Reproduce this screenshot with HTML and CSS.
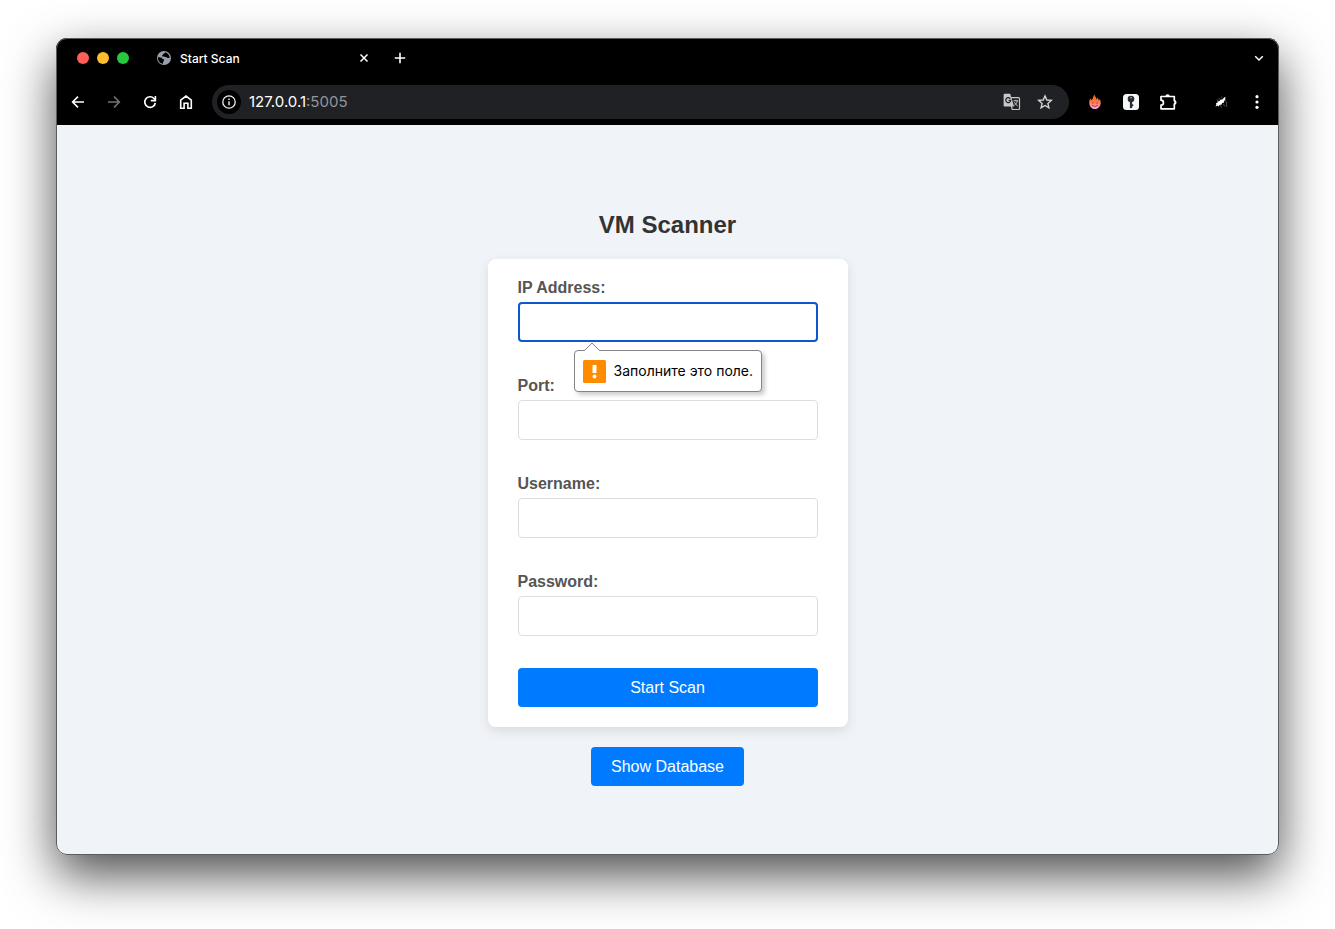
FILE: index.html
```html
<!DOCTYPE html>
<html lang="en">
<head>
<meta charset="utf-8">
<title>Start Scan</title>
<link rel="stylesheet" href="styles.css">
</head>
<body>
<div class="window">
  <header class="chrome">
    <div class="tabs">
      <div class="lights">
        <button class="light light-close" aria-label="Close window"></button>
        <button class="light light-min" aria-label="Minimize window"></button>
        <button class="light light-max" aria-label="Zoom window"></button>
      </div>
      <div class="tab">
        <svg class="favicon" viewBox="0 0 16 16" width="16" height="16"><circle cx="8" cy="8" r="7" fill="#9aa0a9"/><path d="M2 7.200c2 0 3.400.2 4.200 1.200.7.900 2 .6 2 1.700 0 1-1 1.100-1.100 2.100l-.1 1.600C3.800 13.300 1.700 10.600 2 7.200zM9.400 2.200c-.2 1-1.700 1-1.900 1.800-.2.900-1.500.8-1.400 1.700.1.800 1.600.4 2.300 1 .7.700 1.600.200 2.300.7.800.6 1.900.4 2.900.7.100-2.800-1.600-5-4.200-5.900z" fill="#000"/></svg>
        <span class="tab-title">Start Scan</span>
        <button class="icon tab-close" aria-label="Close tab"><svg viewBox="0 0 16 16" width="16" height="16"><path d="M4.500 4.500l7 7M11.500 4.500l-7 7" stroke="#fff" stroke-width="1.500"/></svg></button>
      </div>
      <button class="icon" aria-label="New tab"><svg viewBox="0 0 16 16" width="16" height="16"><path d="M8 2.800v10.400M2.800 8h10.400" stroke="#fff" stroke-width="1.600"/></svg></button>
      <button class="icon tab-search" aria-label="Search tabs"><svg viewBox="0 0 16 16" width="16" height="16"><path d="M4.200 6.300L8 10l3.800-3.700" stroke="#fff" stroke-width="1.500" fill="none"/></svg></button>
    </div>
    <div class="toolbar">
      <div class="nav">
        <button class="icon" aria-label="Back"><svg viewBox="0 0 16 16" width="16" height="16"><path d="M14 8H3M8 2.600L2.600 8 8 13.400" stroke="#fff" stroke-width="1.600" fill="none"/></svg></button>
        <button class="icon" aria-label="Forward"><svg viewBox="0 0 16 16" width="16" height="16"><path d="M2 8h11M8 2.600L13.400 8 8 13.400" stroke="#747474" stroke-width="1.500" fill="none"/></svg></button>
        <button class="icon" aria-label="Reload"><svg viewBox="0 0 16 16" width="16" height="16"><path d="M13.300 8.800A5.300 5.300 0 1 1 12 4.500L13 5.600" stroke="#fff" stroke-width="1.700" fill="none"/><path d="M13.400 2v4.600H8.800" stroke="#fff" stroke-width="1.600" fill="none"/></svg></button>
        <button class="icon" aria-label="Home"><svg viewBox="0 0 16 16" width="16" height="16"><path d="M2.700 6.100L8 2l5.300 4.100v8.100H9.900V9.300H6.100v4.900H2.700z" stroke="#fff" stroke-width="1.600" fill="none"/></svg></button>
      </div>
      <div class="omnibox">
        <button class="site-info" aria-label="View site information"><svg viewBox="0 0 16 16" width="16" height="16"><circle cx="8" cy="8" r="6.200" stroke="#f1f1f1" stroke-width="1.300" fill="none"/><path d="M8 7.200v4M8 4.500v1.400" stroke="#f1f1f1" stroke-width="1.400"/></svg></button>
        <div class="url" role="textbox" aria-label="Address" tabindex="0">127.0.0.1<span class="port">:5005</span></div>
        <button class="icon" aria-label="Translate this page"><svg viewBox="0 0 18 18" width="18" height="18"><path d="M7 4.700h8.500c.6 0 1 .4 1 1v9.800c0 .6-.4 1-1 1H9.200L6.500 5" stroke="#c7c7c7" stroke-width="1.200" fill="none"/><path d="M1.800.8h5.400l3.900 12.800H1.800c-.7 0-1.200-.5-1.200-1.200V2C.600 1.300 1.100.8 1.800.8z" fill="#c7c7c7"/><path d="M7.300 5.600A2.500 2.500 0 1 0 7.800 7.300H5.600" stroke="#202124" stroke-width="1.200" fill="none"/><path d="M10.500 7.800h4.800M12.800 6.800v1M14.300 8c-.4 1.900-1.400 3.300-2.900 4.300M11.400 9.200c.8 1.700 1.900 2.800 3.300 3.800" stroke="#c7c7c7" fill="none"/></svg></button>
        <button class="icon" aria-label="Bookmark this tab"><svg viewBox="0 0 16 16" width="16" height="16"><path d="M8 1.900l1.800 4.100 4.500.4-3.400 3 1 4.400L8 11.500l-3.900 2.300 1-4.400-3.400-3 4.500-.4z" stroke="#d5d5d5" stroke-width="1.400" fill="none"/></svg></button>
      </div>
      <div class="extensions">
        <button class="icon" aria-label="Flame extension"><svg viewBox="0 0 16 16" width="16" height="16"><defs><linearGradient id="flame" x1="0" y1="0" x2="0" y2="1"><stop offset="0" stop-color="#ff5b00"/><stop offset=".5" stop-color="#ff7843"/><stop offset="1" stop-color="#ffa6e8"/></linearGradient></defs><path d="M2.300 9.500C2 7.500 2.800 6 2.900 4.500c.9.500 1.300 1.100 1.500 1.800C6 5 5.800 2.600 7.600.5c.2 2 1.800 2.900 2 5 .5-.5.700-1.100.6-2 1.200.8 1.300 2 1.500 3.100.6-.400.9-.9 1.200-1.500.5 1.600 1.100 3.200.7 5-.5 2.900-2.700 5-5.600 5S2.700 12.700 2.300 9.500z" fill="url(#flame)"/><path d="M5 9.200q.8-1 1.600 0M9.200 9.200q.8-1 1.600 0M4.900 11.200q3 2.700 6.200 0" stroke="#7a2c3c" stroke-width=".8" fill="none"/></svg></button>
        <button class="icon" aria-label="Password extension"><svg viewBox="0 0 16 16" width="16" height="16"><rect width="16" height="16" rx="3.500" fill="#f5f6f8"/><circle cx="8" cy="5" r="3.300" fill="#292b30"/><path d="M6.900 7.500h2.200v5.800L8 14.400l-1.100-1.100z" fill="#292b30"/><path d="M9 10.300h1.200v2H9z" fill="#292b30"/><circle cx="8" cy="3.800" r=".8" fill="#b9babd"/></svg></button>
        <button class="icon" aria-label="Extensions"><svg viewBox="0 0 18 18" width="18" height="18"><path d="M2 3.500h13.300v4.200a1.800 1.800 0 0 1 0 3.500v4.600H2v-3.700a2.400 2.400 0 0 0 0-4.900z" stroke="#fff" stroke-width="1.700" stroke-linejoin="round" fill="none"/><path d="M6.400 3.400a2.200 2.200 0 0 1 4.400 0zM15.400 7.300a2.200 2.200 0 0 1 0 4.200z" fill="#fff"/></svg></button>
      </div>
      <div class="account">
        <button class="icon" aria-label="Profile"><svg viewBox="0 0 16 16" width="16" height="16"><path d="M2.500 12.800l.8-2-.3-1.500 1.600-.6-.4-1.300 1.900-.1L8 5.200l1 .5 2.800-2.800.9.900-.9 1.600 1.200.3-2.100 1.400.3 1.300-2.100.7-.6 1.700-1.600-.1-1.500 1.900-.9-1z" fill="#fff"/><path d="M5 7L4 5.500M9 4.500V2.500M10 9.500l2 3M12 7l1.500 1v5M7.500 11l1 2.500M5.500 6l1-2" stroke="#666" stroke-width=".7" fill="none"/></svg></button>
        <button class="icon" aria-label="Menu"><svg viewBox="0 0 16 16" width="16" height="16"><g fill="#fff"><circle cx="8" cy="2.700" r="1.600"/><circle cx="8" cy="8" r="1.600"/><circle cx="8" cy="13.300" r="1.600"/></g></svg></button>
      </div>
    </div>
  </header>
  <main class="page">
    <h1 class="title">VM Scanner</h1>
    <form class="card">
      <div class="field">
        <label class="label" for="ip">IP Address:</label>
        <input class="input input-active" id="ip" type="text" required>
        <div class="bubble" role="alert">
          <svg class="bubble-arrow" viewBox="0 0 18 9" width="18" height="9"><path d="M1 9L9 1l8 8" fill="#fff" stroke="#858585"/></svg>
          <svg viewBox="0 0 23 23" width="23" height="23"><rect width="23" height="23" rx="1.500" fill="#ff8c00"/><path d="M9.500 5h4v8h-4z" fill="#fff"/><circle cx="11.500" cy="16.500" r="1.900" fill="#fff"/></svg>
          <span>Заполните это поле.</span>
        </div>
      </div>
      <div class="field">
        <label class="label" for="port">Port:</label>
        <input class="input" id="port" type="text" required>
      </div>
      <div class="field">
        <label class="label" for="user">Username:</label>
        <input class="input" id="user" type="text" required>
      </div>
      <div class="field">
        <label class="label" for="pass">Password:</label>
        <input class="input" id="pass" type="password" required>
      </div>
      <button class="btn" type="submit">Start Scan</button>
    </form>
    <button class="btn" type="button">Show Database</button>
  </main>
</div>
</body>
</html>
```
FILE: styles.css
```css
* {
  box-sizing: border-box;
}

body {
  margin: 0;
  min-height: 100vh;
  padding: 38px 56px 74px;
  display: flex;
  background: #fff;
  font-family: "Liberation Sans", Arial, sans-serif;
}

button {
  border: 0;
  padding: 0;
  font: inherit;
}

.window {
  flex: 1;
  display: flex;
  flex-direction: column;
  outline: 1px solid #5c5c5c;
  outline-offset: -1px;
  border-radius: 11px;
  background: #f0f3f8;
  box-shadow: 0 20px 50px rgba(0, 0, 0, 0.7);
}

.chrome {
  background: #000;
  border-radius: 11px 11px 0 0;
  color: #fff;
  font-family: Inter, "Noto Sans", sans-serif;
}

.tabs {
  display: flex;
  align-items: center;
  height: 40px;
  padding: 0 12px 0 21px;
}

.lights {
  display: flex;
  gap: 8px;
}

.light {
  width: 12px;
  height: 12px;
  border-radius: 50%;
}

.light-close {
  background: #ff5f57;
}

.light-min {
  background: #febc2e;
}

.light-max {
  background: #28c840;
}

.tab {
  display: flex;
  align-items: center;
  gap: 8px;
  width: 216px;
  margin: 0 20px 0 27px;
  font-size: 12px;
  font-weight: 500;
}

.icon {
  display: flex;
  background: none;
}

.tab-close,
.tab-search {
  margin-left: auto;
}

.toolbar {
  display: flex;
  align-items: center;
  height: 47px;
  padding: 0 14px;
}

.nav {
  display: flex;
  gap: 20px;
}

.omnibox {
  flex: 1;
  display: flex;
  align-items: center;
  gap: 16px;
  height: 34px;
  margin: 0 18px;
  padding: 0 16px 0 5px;
  border-radius: 17px;
  background: #202124;
  font-size: 15px;
}

.site-info {
  display: flex;
  align-items: center;
  justify-content: center;
  width: 24px;
  height: 24px;
  border-radius: 50%;
  background: #000;
}

.url {
  flex: 1;
  margin-left: -8px;
}

.port {
  color: #93959a;
}

.extensions {
  display: flex;
  align-items: center;
  gap: 20px;
}

.account {
  display: flex;
  gap: 20px;
  margin-left: 36px;
}

.page {
  flex: 1;
  display: flex;
  flex-direction: column;
  align-items: center;
  gap: 20px;
  padding: 86px 20px 68px;
}

.title {
  margin: 0;
  color: #333;
  font-size: 24px;
  line-height: 28px;
}

.card {
  display: flex;
  flex-direction: column;
  width: 100%;
  max-width: 360px;
  padding: 20px 30px;
  border-radius: 8px;
  background: #fff;
  box-shadow: 0 4px 12px rgba(0, 0, 0, 0.1);
}

.field {
  position: relative;
  display: flex;
  flex-direction: column;
  gap: 5px;
  margin-bottom: 35px;
}

.field:last-of-type {
  margin-bottom: 32px;
}

.label {
  color: #555;
  font-size: 16px;
  font-weight: bold;
  line-height: 18px;
}

.input {
  width: 100%;
  height: 40px;
  padding: 10px;
  border: 1px solid #ddd;
  border-radius: 4px;
  background: #fff;
  font-size: 16px;
}

.input-active {
  border: 2px solid #0b57d0;
}

.bubble {
  position: absolute;
  top: 71px;
  left: 56px;
  z-index: 1;
  display: flex;
  align-items: center;
  gap: 8px;
  padding: 8px;
  border: 1px solid #858585;
  border-radius: 4px;
  background: #fff;
  box-shadow: 3px 3px 4px rgba(0, 0, 0, 0.2);
  color: #000;
  font-family: Inter, "Noto Sans", sans-serif;
  font-size: 14px;
  line-height: 24px;
  white-space: nowrap;
}

.bubble-arrow {
  position: absolute;
  top: -9px;
  left: 8px;
}

.btn {
  padding: 10px 20px;
  border-radius: 4px;
  background: #007bff;
  color: #fff;
  font-size: 16px;
  line-height: 19px;
}
```
